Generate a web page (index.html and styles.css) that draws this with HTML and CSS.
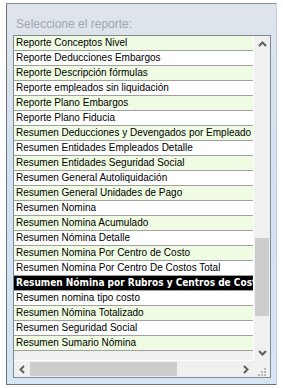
FILE: index.html
```
<!DOCTYPE html>
<html lang="es">
<head>
    <meta charset="UTF-8">
    <meta name="viewport" content="width=device-width, initial-scale=1.0">
    <title>Reportes</title>
    <link rel="stylesheet" href="styles.css">
</head>

<body>
    <div class="panel">
        <div class="titulo">Seleccione el reporte:</div>
        <div class="lista">
            <div class="cuerpo">
                <div class="filas">
                    <div class="fila par">Reporte Conceptos Nivel</div>
                    <div class="fila">Reporte Deducciones Embargos</div>
                    <div class="fila par">Reporte Descripción fórmulas</div>
                    <div class="fila">Reporte empleados sin liquidación</div>
                    <div class="fila par">Reporte Plano Embargos</div>
                    <div class="fila">Reporte Plano Fiducia</div>
                    <div class="fila par">Resumen Deducciones y Devengados por Empleado</div>
                    <div class="fila">Resumen Entidades Empleados Detalle</div>
                    <div class="fila par">Resumen Entidades Seguridad Social</div>
                    <div class="fila">Resumen General Autoliquidación</div>
                    <div class="fila par">Resumen General Unidades de Pago</div>
                    <div class="fila">Resumen Nomina</div>
                    <div class="fila par">Resumen Nomina Acumulado</div>
                    <div class="fila">Resumen Nómina Detalle</div>
                    <div class="fila par">Resumen Nomina Por Centro de Costo</div>
                    <div class="fila">Resumen Nomina Por Centro De Costos Total</div>
                    <div class="fila activa">Resumen Nómina por Rubros y Centros de Costo</div>
                    <div class="fila">Resumen nomina tipo costo</div>
                    <div class="fila par">Resumen Nómina Totalizado</div>
                    <div class="fila">Resumen Seguridad Social</div>
                    <div class="fila par">Resumen Sumario Nómina</div>
                </div>
                <!-- barra vertical -->
                <div class="vbarra">
                    <div class="flecha">
                        <svg width="9" height="6" viewBox="0 0 9 6"><path d="M1 5 L4.5 1.5 L8 5" fill="none" stroke="#606060" stroke-width="2"/></svg>
                    </div>
                    <div class="vpista">
                        <div class="vpulgar"></div>
                    </div>
                    <div class="flecha">
                        <svg width="9" height="6" viewBox="0 0 9 6"><path d="M1 1 L4.5 4.5 L8 1" fill="none" stroke="#606060" stroke-width="2"/></svg>
                    </div>
                </div>
            </div>
            <!-- barra horizontal -->
            <div class="hbarra">
                <div class="hflecha">
                    <svg width="6" height="9" viewBox="0 0 6 9"><path d="M5 1 L1.5 4.5 L5 8" fill="none" stroke="#606060" stroke-width="2"/></svg>
                </div>
                <div class="hpista">
                    <div class="hpulgar"></div>
                </div>
                <div class="hflecha">
                    <svg width="6" height="9" viewBox="0 0 6 9"><path d="M1 1 L4.5 4.5 L1 8" fill="none" stroke="#606060" stroke-width="2"/></svg>
                </div>
                <div class="agarre">
                    <svg width="10" height="10" viewBox="0 0 10 10" fill="#b8b8b8">
                        <rect x="7" y="1" width="2" height="2"/>
                        <rect x="4" y="4" width="2" height="2"/><rect x="7" y="4" width="2" height="2"/>
                        <rect x="1" y="7" width="2" height="2"/><rect x="4" y="7" width="2" height="2"/><rect x="7" y="7" width="2" height="2"/>
                    </svg>
                </div>
            </div>
        </div>
    </div>
</body>
</html>
```

FILE: styles.css
```
body{
    margin: 0;
    background-color: #ffffff;
    font-family: "Liberation Sans", Arial, sans-serif;
}

/* marco del grupo */
.panel{
    box-sizing: border-box;
    width: 271px;
    height: 382px;
    margin: 3px 0 0 6px;
    border-top: 1px solid #8c8f94;
    border-left: 1px solid #6f7276;
    border-bottom: 1px solid #6f7276;
    border-right: 1px solid #c6d3e0;
    background: linear-gradient(#dfe4ea, #d3e2f2 40%, #d6e5f4);
    display: flex;
    flex-direction: column;
}
.titulo{
    height: 31px;
    padding: 13px 0 0 9px;
    box-sizing: border-box;
    font-size: 12px;
    color: #a2a7ad;
}

.lista{
    box-sizing: border-box;
    width: 258px;
    height: 343px;
    margin-left: 6px;
    border: 1px solid #828790;
    background-color: #f0f0f0;
    display: flex;
    flex-direction: column;
}
.cuerpo{
    flex: 1;
    display: flex;
    min-height: 0;
}
.filas{
    flex: 1;
    overflow: hidden;
    border-right: 1px solid #ffffff;
    border-bottom: 1px solid #ffffff;
}
.fila{
    height: 14px;
    line-height: 14px;
    border-bottom: 1px solid #a0a0a0;
    background-color: #ffffff;
    padding-left: 2px;
    font-size: 10px;
    color: #000000;
    white-space: nowrap;
    overflow: hidden;
}
.par{
    background-color: #effbe2;
}
.activa{
    background-color: #000000;
    color: #ffffff;
    font-family: "DejaVu Sans Condensed", "DejaVu Sans", sans-serif;
    font-weight: bold;
    font-size: 10px;
}

/* barras de desplazamiento */
.vbarra{
    width: 16px;
    display: flex;
    flex-direction: column;
}
.flecha{
    height: 16px;
    display: flex;
    align-items: center;
    justify-content: center;
}
.vpista{
    flex: 1;
    position: relative;
}
.vpulgar{
    position: absolute;
    left: 1px;
    right: 1px;
    top: 186px;
    height: 78px;
    background-color: #cdcdcd;
}
.hbarra{
    height: 16px;
    display: flex;
}
.hflecha{
    width: 16px;
    display: flex;
    align-items: center;
    justify-content: center;
}
.hpista{
    flex: 1;
    display: flex;
    align-items: center;
}
.hpulgar{
    width: 147px;
    height: 14px;
    background-color: #cdcdcd;
}
.agarre{
    width: 16px;
    display: flex;
    align-items: flex-end;
    justify-content: center;
}
```
